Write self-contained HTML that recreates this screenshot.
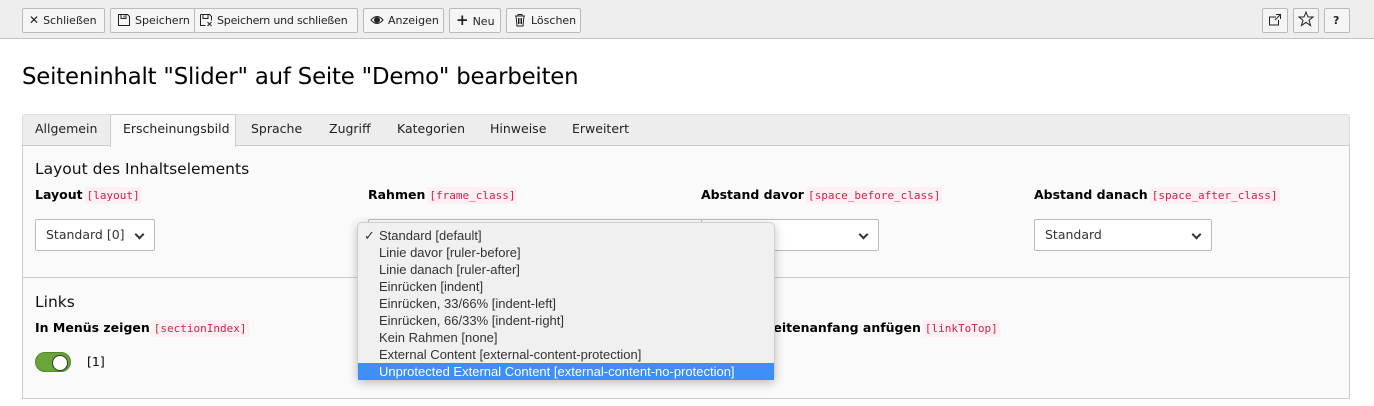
<!DOCTYPE html>
<html><head><meta charset="utf-8"><style>
*{box-sizing:border-box;margin:0;padding:0}
body{width:1374px;height:406px;background:#fff;font-family:"DejaVu Sans","Liberation Sans",sans-serif;font-size:12px;color:#000;position:relative;overflow:hidden}
.tb{position:absolute;left:0;top:0;width:1374px;height:39px;background:#eee;border-bottom:1px solid #c3c3c3}
.b{position:absolute;top:8px;height:25px;border:1px solid #bbb;background:#f5f5f5;border-radius:2px;font-size:11px;line-height:23px;padding-left:6px;color:#222;white-space:nowrap;overflow:hidden}
.b svg{vertical-align:-3px;margin-right:4px}
h1{position:absolute;left:22px;top:62px;font-size:23.5px;font-weight:normal;letter-spacing:-0.2px;font-family:"DejaVu Sans","Liberation Sans",sans-serif;transform:scaleX(0.97);transform-origin:left;white-space:nowrap}
.tabs{position:absolute;left:22px;top:114px;width:1328px;height:32px;background:#ededed;border:1px solid #ddd;border-bottom:1px solid #ccc;border-radius:3px 3px 0 0}
.t{position:absolute;top:121px;font-size:12.5px;color:#222}
.act{position:absolute;left:110px;top:114px;width:126px;height:33px;background:#fafafa;border:1px solid #ccc;border-bottom:none}
.panel{position:absolute;left:22px;top:145px;width:1328px;height:254px;background:#fafafa;border:1px solid #ccc}
.div{position:absolute;left:22px;top:277px;width:1328px;height:1px;background:#ccc}
.h{position:absolute;font-size:15.5px;color:#111}
.l{position:absolute;font-size:12.5px;font-weight:bold;white-space:nowrap}
.l code{font-family:"DejaVu Sans Mono","Liberation Mono",monospace;font-weight:normal;font-size:11px;color:#d6204e;background:#fdf0f2;padding:2px 2px;margin-left:2px}
.s{position:absolute;top:219px;height:32px;border:1px solid #bbb;background:#fff;border-radius:2px;font-size:12.5px;line-height:30px;padding-left:10px;color:#333}
.s:after{content:"";position:absolute;right:11px;top:11px;width:5px;height:5px;border-right:2px solid #333;border-bottom:2px solid #333;transform:rotate(45deg)}
.dd{position:absolute;left:357px;top:222px;width:418px;height:158px;background:#f0f0f0;border:1px solid #cfcfcf;border-radius:5px;box-shadow:0 3px 10px rgba(0,0,0,.25);padding-top:4px}
.dd div{height:17px;line-height:17px;padding-left:21px;color:#333;font-family:"Liberation Sans",sans-serif;font-size:13px;position:relative}
.dd .sel{background:#3d8ef5;color:#fff}
.tog{position:absolute;left:35px;top:352px;width:36px;height:20px;background:#6ba43a;border:1px solid #4f8a26;border-radius:10px}
.tog:after{content:"";position:absolute;right:2px;top:2px;width:14px;height:14px;border-radius:50%;background:#fff;border:1px solid #333}
</style></head><body>
<div class="tb">
<div class="b" style="left:22px;width:83px"><b style="font-size:12px;margin-right:4px">✕</b>Schließen</div>
<div class="b" style="left:110px;width:85px"><svg width="14" height="14" viewBox="0 0 14 14"><path d="M1.5 1.5h9l2 2v9h-11z M4 1.5v4h5v-4 M7 2.5v2" fill="none" stroke="#222"/></svg>Speichern</div>
<div class="b" style="left:194px;width:164px;padding-left:4px;letter-spacing:-0.2px"><svg width="14" height="14" viewBox="0 0 14 14"><path d="M1.5 1.5h9l2 2v4 M1.5 1.5v11h5 M4 1.5v4h5v-4 M8.5 9l4 4 M12.5 9l-4 4" fill="none" stroke="#222"/></svg>Speichern und schließen</div>
<div class="b" style="left:363px;width:81px"><svg width="14" height="14" viewBox="0 0 14 14"><path d="M1 7q6-7 12 0q-6 7-12 0z" fill="#fff" stroke="#222"/><circle cx="7" cy="7" r="3" fill="#222"/></svg>Anzeigen</div>
<div class="b" style="left:449px;width:52px"><b style="font-size:15px;margin-right:4px">+</b>Neu</div>
<div class="b" style="left:506px;width:75px"><svg width="14" height="14" viewBox="0 0 14 14"><path d="M2 3h10 M5 3V1.5h4V3 M3 3l1 10h6l1-10 M5.5 5v6 M7 5v6 M8.5 5v6" fill="none" stroke="#222"/></svg>Löschen</div>
<div class="b" style="left:1262px;width:26px;padding-left:5px"><svg width="14" height="14" viewBox="0 0 14 14"><path d="M8 4H1.5v8h9V7 M8 1.5h4.5V6 M12.5 1.5L7 7" fill="none" stroke="#222"/></svg></div>
<div class="b" style="left:1293px;width:26px;padding-left:4px"><svg width="16" height="16" viewBox="0 0 16 16"><path d="M8 1l2 5h5l-4 3.3 1.6 5.2L8 11.4 3.4 14.5 5 9.3 1 6h5z" fill="none" stroke="#222"/></svg></div>
<div class="b" style="left:1324px;width:26px;padding-left:8px;font-weight:bold">?</div>
</div>
<h1>Seiteninhalt "Slider" auf Seite "Demo" bearbeiten</h1>
<div class="tabs"></div>
<div class="panel"></div>
<div class="act"></div>
<span class="t" style="left:35px">Allgemein</span>
<span class="t" style="left:123px">Erscheinungsbild</span>
<span class="t" style="left:251px">Sprache</span>
<span class="t" style="left:329px">Zugriff</span>
<span class="t" style="left:397px">Kategorien</span>
<span class="t" style="left:490px">Hinweise</span>
<span class="t" style="left:572px">Erweitert</span>
<div class="div"></div>
<div class="h" style="left:35px;top:160px">Layout des Inhaltselements</div>
<div class="l" style="left:35px;top:187px">Layout<code>[layout]</code></div>
<div class="l" style="left:368px;top:187px">Rahmen<code>[frame_class]</code></div>
<div class="l" style="left:701px;top:187px">Abstand davor<code>[space_before_class]</code></div>
<div class="l" style="left:1034px;top:187px">Abstand danach<code>[space_after_class]</code></div>
<div class="s" style="left:35px;width:120px">Standard [0]</div>
<div class="s" style="left:368px;width:337px"></div>
<div class="s" style="left:701px;width:178px"></div>
<div class="s" style="left:1034px;width:178px">Standard</div>
<div class="h" style="left:35px;top:293px">Links</div>
<div class="l" style="left:35px;top:320px">In Menüs zeigen<code>[sectionIndex]</code></div>
<div class="l" style="left:697px;top:320px">Link zum Seitenanfang anfügen<code>[linkToTop]</code></div>
<div class="tog"></div>
<span style="position:absolute;left:87px;top:354px;font-size:12.5px">[1]</span>
<div class="dd">
<div><span style="position:absolute;left:6px">✓</span>Standard [default]</div>
<div>Linie davor [ruler-before]</div>
<div>Linie danach [ruler-after]</div>
<div>Einrücken [indent]</div>
<div>Einrücken, 33/66% [indent-left]</div>
<div>Einrücken, 66/33% [indent-right]</div>
<div>Kein Rahmen [none]</div>
<div>External Content [external-content-protection]</div>
<div class="sel">Unprotected External Content [external-content-no-protection]</div>
</div>
</body></html>
